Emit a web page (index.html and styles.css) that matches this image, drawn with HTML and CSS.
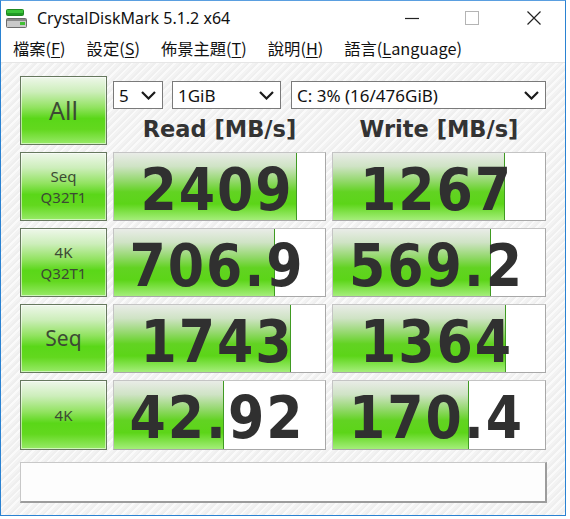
FILE: index.html
```html
<!DOCTYPE html>
<html>
<head>
<meta charset="utf-8">
<link rel="stylesheet" href="styles.css">
</head>
<body>
<div class="window">
  <div class="titlebar">
    <svg class="appicon" width="22" height="20" viewBox="0 0 22 20">
      <rect x="0.5" y="0.5" width="17" height="6" rx="1" fill="#3cc43a" stroke="#1f8a22"/>
      <rect x="1" y="4" width="16" height="2" fill="#229a26"/>
      <rect x="0.5" y="9.5" width="20" height="9" rx="1" fill="#c9c9c9" stroke="#6c6c6c"/>
      <rect x="1" y="10" width="19" height="2" fill="#8a8a8a"/>
      <rect x="14" y="13" width="5" height="3" fill="#41c035"/>
    </svg>
    <span class="title">CrystalDiskMark 5.1.2 x64</span>
    <div class="controls">
      <span class="ctl"><svg width="14" height="14" viewBox="0 0 14 14"><line x1="0" y1="7.5" x2="14" y2="7.5" stroke="#222" stroke-width="1.2"/></svg></span>
      <span class="ctl"><svg width="14" height="14" viewBox="0 0 14 14"><rect x="0.5" y="0.5" width="13" height="13" fill="none" stroke="#b4b4b4" stroke-width="1"/></svg></span>
      <span class="ctl"><svg width="14" height="14" viewBox="0 0 14 14"><path d="M0.5 0.5 L13.5 13.5 M13.5 0.5 L0.5 13.5" stroke="#222" stroke-width="1.2"/></svg></span>
    </div>
  </div>
  <div class="menubar">
    <span class="mi">檔案(<u>F</u>)</span>
    <span class="mi">設定(<u>S</u>)</span>
    <span class="mi">佈景主題(<u>T</u>)</span>
    <span class="mi">說明(<u>H</u>)</span>
    <span class="mi">語言(<u>L</u>anguage)</span>
  </div>
  <div class="client">
    <div class="grid">
      <div class="btn big">All</div>
      <div class="topctl">
        <div class="selects">
          <div class="sel s1"><span>5</span><svg class="chev" width="15" height="9" viewBox="0 0 15 9"><path d="M1 1 L7.5 7.5 L14 1" fill="none" stroke="#1a1a1a" stroke-width="2.2"/></svg></div>
          <div class="sel s2"><span>1GiB</span><svg class="chev" width="15" height="9" viewBox="0 0 15 9"><path d="M1 1 L7.5 7.5 L14 1" fill="none" stroke="#1a1a1a" stroke-width="2.2"/></svg></div>
          <div class="sel s3"><span>C: 3% (16/476GiB)</span><svg class="chev" width="15" height="9" viewBox="0 0 15 9"><path d="M1 1 L7.5 7.5 L14 1" fill="none" stroke="#1a1a1a" stroke-width="2.2"/></svg></div>
        </div>
        <div class="heads">
          <div class="head">Read [MB/s]</div>
          <div class="head">Write [MB/s]</div>
        </div>
      </div>

      <div class="btn"><span>Seq</span><span>Q32T1</span></div>
      <div class="cell"><div class="fill" style="width:86.9%"></div><span class="num">2409</span></div>
      <div class="cell"><div class="fill" style="width:81.3%"></div><span class="num">1267</span></div>

      <div class="btn"><span>4K</span><span>Q32T1</span></div>
      <div class="cell"><div class="fill" style="width:76.1%"></div><span class="num">706.9</span></div>
      <div class="cell"><div class="fill" style="width:74.3%"></div><span class="num">569.2</span></div>

      <div class="btn mid">Seq</div>
      <div class="cell"><div class="fill" style="width:84.0%"></div><span class="num">1743</span></div>
      <div class="cell"><div class="fill" style="width:81.8%"></div><span class="num">1364</span></div>

      <div class="btn">4K</div>
      <div class="cell"><div class="fill" style="width:52.1%"></div><span class="num">42.92</span></div>
      <div class="cell"><div class="fill" style="width:64.0%"></div><span class="num">170.4</span></div>
    </div>
    <div class="comment"></div>
  </div>
</div>
</body>
</html>
```
FILE: styles.css
```css
* { box-sizing: border-box; }
html, body { margin: 0; padding: 0; background: #ffffff; }
body { width: 570px; height: 519px; overflow: hidden; }

.window {
  width: 566px;
  height: 516px;
  border: 1px solid #2a82d2;
  border-top-color: #5a9fe0;
  background: #ffffff;
  display: flex;
  flex-direction: column;
}

.titlebar {
  height: 32px;
  display: flex;
  align-items: center;
  padding-left: 5px;
  background: #ffffff;
}
.appicon { margin-top: 3px; }
.title {
  margin-left: 9px;
  margin-top: 2px;
  font-family: "Noto Sans", "Liberation Sans", sans-serif;
  font-size: 16px;
  color: #111;
}
.controls {
  margin-left: auto;
  display: flex;
  height: 32px;
}
.ctl {
  width: 62px;
  display: flex;
  align-items: center;
  justify-content: center;
  padding-top: 2px;
}
.ctl:first-child { width: 58px; }

.menubar {
  height: 30px;
  display: flex;
  align-items: center;
  padding-left: 12px;
  gap: 21px;
  font-family: "Noto Sans CJK TC", "Noto Sans", sans-serif;
  font-size: 16.3px;
  color: #111;
  border-bottom: 1px solid #e6e6e6;
  background: #ffffff;
}
.mi { line-height: 30px; padding-top: 1px; }
.mi u { text-underline-offset: 2px; text-decoration-thickness: 1px; }

.client {
  flex: 1;
  padding: 13px 17px 0 19px;
  background-color: #f3f3f3;
  background-image: repeating-linear-gradient(135deg, #efefef 0 2px, #fafafa 2px 4px, #f3f3f3 4px 6px);
}

.grid {
  display: grid;
  grid-template-columns: 87px 213px 214px;
  grid-template-rows: 69px 69px 69px 69px 70px;
  column-gap: 6px;
  row-gap: 7px;
}

.btn {
  border: 1px solid #66785e;
  background: linear-gradient(to bottom, #eef7ea 0%, #cdeebb 22%, #93e362 45%, #5ad718 62%, #62d81e 78%, #98ea68 100%);
  box-shadow: inset 0 0 0 1px rgba(255,255,255,0.55);
  display: flex;
  flex-direction: column;
  align-items: center;
  justify-content: center;
  font-family: "Noto Sans", "DejaVu Sans", sans-serif;
  font-size: 15px;
  line-height: 21px;
  color: #3c4a34;
}
.btn.big { font-size: 25px; }
.btn.mid { font-size: 21px; }

.topctl {
  grid-column: 2 / 4;
  display: flex;
  flex-direction: column;
  padding-top: 5px;
}
.selects {
  display: flex;
  height: 28px;
}
.sel {
  height: 28px;
  background: #ffffff;
  border: 1px solid #7a7a7a;
  display: flex;
  align-items: center;
  padding: 0 6px 0 5px;
  font-family: "Noto Sans", "Liberation Sans", sans-serif;
  font-size: 17px;
  color: #111;
}
.sel .chev { margin-left: auto; }
.s1 { width: 50px; }
.s2 { width: 109px; margin-left: 9px; }
.s3 { width: 255px; margin-left: 10px; }

.heads {
  flex: 1;
  display: grid;
  grid-template-columns: 213px 214px;
  column-gap: 6px;
}
.head {
  text-align: center;
  font-family: "DejaVu Sans", "Liberation Sans", sans-serif;
  font-weight: bold;
  font-size: 22.5px;
  line-height: 36px;
  color: #333333;
  padding-top: 2px;
}

.cell {
  position: relative;
  background: #ffffff;
  border: 1px solid #c4c4c4;
  border-right-color: #a8a8a8;
  border-bottom-color: #a8a8a8;
  display: flex;
  align-items: center;
  justify-content: center;
}
.fill {
  position: absolute;
  left: 0;
  top: 0;
  bottom: 0;
  border-right: 1px solid #3f9a22;
  background: linear-gradient(to bottom, #e9ece7 0%, #cfe3c5 20%, #92d86a 42%, #62d322 58%, #5cd518 76%, #a4ee7a 100%);
}
.num {
  position: relative;
  font-family: "DejaVu Sans Condensed", "DejaVu Sans", sans-serif;
  font-stretch: condensed;
  font-weight: bold;
  font-size: 58px;
  line-height: 58px;
  padding-top: 6px;
  padding-right: 5px;
  color: #303030;
  letter-spacing: 2px;
}

.comment {
  margin-top: 12px;
  width: 527px;
  height: 41px;
  background: #fdfdfd;
  border: 1px solid #c8c8c8;
  border-right: 2px solid #9c9c9c;
  border-bottom: 2px solid #9c9c9c;
}
```
